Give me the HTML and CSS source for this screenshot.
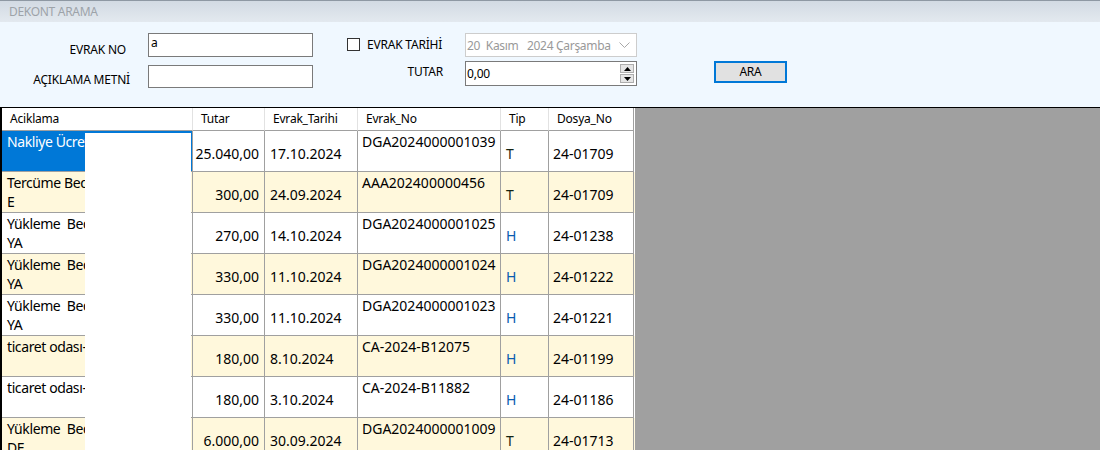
FILE: index.html
```html
<!DOCTYPE html>
<html lang="tr">
<head>
<meta charset="utf-8">
<title>Dekont Arama</title>
<link rel="stylesheet" href="styles.css">
</head>
<body>
<div class="window">
  <div class="titlebar">DEKONT ARAMA</div>
  <form class="search">
    <label class="lbl lbl-evrak">EVRAK NO</label>
    <div class="input input-evrak">a</div>
    <label class="check"><span class="box"></span>EVRAK TARİHİ</label>
    <div class="date"><span class="date-text">20  Kasım   2024 Çarşamba</span>
      <svg class="chev" width="11" height="7" viewBox="0 0 11 7"><polyline points="0.5,0.5 5.5,5.5 10.5,0.5" fill="none" stroke="#a8a8a8" stroke-width="1"/></svg>
    </div>
    <label class="lbl lbl-acik">AÇIKLAMA METNİ</label>
    <div class="input input-acik"></div>
    <label class="lbl lbl-tutar">TUTAR</label>
    <div class="numeric"><span>0,00</span>
      <span class="spin">
        <span class="spin-btn"><svg width="7" height="4" viewBox="0 0 7 4"><polygon points="0,4 7,4 3.5,0" fill="#000"/></svg></span>
        <span class="spin-btn"><svg width="7" height="4" viewBox="0 0 7 4"><polygon points="0,0 7,0 3.5,4" fill="#000"/></svg></span>
      </span>
    </div>
    <button type="button" class="btn">ARA</button>
  </form>
  <div class="workspace">
    <div class="grid">
      <div class="row head">
        <div class="cell">Aciklama</div>
        <div class="cell">Tutar</div>
        <div class="cell">Evrak_Tarihi</div>
        <div class="cell">Evrak_No</div>
        <div class="cell">Tip</div>
        <div class="cell">Dosya_No</div>
      </div>
      <div class="row">
        <div class="cell c-desc selected">Nakliye Ücreti</div>
        <div class="cell c-amt">25.040,00</div>
        <div class="cell c-date">17.10.2024</div>
        <div class="cell c-no">DGA2024000001039</div>
        <div class="cell c-tip t">T</div>
        <div class="cell c-file">24-01709</div>
      </div>
      <div class="row alt">
        <div class="cell c-desc">Tercüme Bed<br>E</div>
        <div class="cell c-amt">300,00</div>
        <div class="cell c-date">24.09.2024</div>
        <div class="cell c-no">AAA202400000456</div>
        <div class="cell c-tip t">T</div>
        <div class="cell c-file">24-01709</div>
      </div>
      <div class="row">
        <div class="cell c-desc">Yükleme  Bed<br>YA</div>
        <div class="cell c-amt">270,00</div>
        <div class="cell c-date">14.10.2024</div>
        <div class="cell c-no">DGA2024000001025</div>
        <div class="cell c-tip h">H</div>
        <div class="cell c-file">24-01238</div>
      </div>
      <div class="row alt">
        <div class="cell c-desc">Yükleme  Bed<br>YA</div>
        <div class="cell c-amt">330,00</div>
        <div class="cell c-date">11.10.2024</div>
        <div class="cell c-no">DGA2024000001024</div>
        <div class="cell c-tip h">H</div>
        <div class="cell c-file">24-01222</div>
      </div>
      <div class="row">
        <div class="cell c-desc">Yükleme  Bed<br>YA</div>
        <div class="cell c-amt">330,00</div>
        <div class="cell c-date">11.10.2024</div>
        <div class="cell c-no">DGA2024000001023</div>
        <div class="cell c-tip h">H</div>
        <div class="cell c-file">24-01221</div>
      </div>
      <div class="row alt">
        <div class="cell c-desc">ticaret odası-</div>
        <div class="cell c-amt">180,00</div>
        <div class="cell c-date">8.10.2024</div>
        <div class="cell c-no">CA-2024-B12075</div>
        <div class="cell c-tip h">H</div>
        <div class="cell c-file">24-01199</div>
      </div>
      <div class="row">
        <div class="cell c-desc">ticaret odası-</div>
        <div class="cell c-amt">180,00</div>
        <div class="cell c-date">3.10.2024</div>
        <div class="cell c-no">CA-2024-B11882</div>
        <div class="cell c-tip h">H</div>
        <div class="cell c-file">24-01186</div>
      </div>
      <div class="row alt">
        <div class="cell c-desc">Yükleme  Bed<br>DE</div>
        <div class="cell c-amt">6.000,00</div>
        <div class="cell c-date">30.09.2024</div>
        <div class="cell c-no">DGA2024000001009</div>
        <div class="cell c-tip t">T</div>
        <div class="cell c-file">24-01713</div>
      </div>
    </div>
    <div class="redact"></div>
  </div>
</div>
</body>
</html>
```

FILE: styles.css
```css
html, body {
  margin: 0;
  padding: 0;
}
body {
  width: 1100px;
  height: 450px;
  overflow: hidden;
  font-family: "Noto Sans", "Open Sans", sans-serif;
  color: #000;
}
.window {
  display: flex;
  flex-direction: column;
  height: 450px;
}
.titlebar {
  height: 21px;
  border-top: 1px solid #8e98a3;
  background: linear-gradient(#d2dae3, #e3e9ef);
  color: #9da3a9;
  font-size: 12px;
  line-height: 21px;
  padding-left: 9px;
  letter-spacing: -0.3px;
}
.search {
  height: 85px;
  box-sizing: border-box;
  margin: 0;
  padding-top: 11px;
  background: #f0f8ff;
  display: grid;
  grid-template-columns: 148px 199px 118px 249px 73px;
  grid-template-rows: 28px 27px;
  font-size: 12px;
  letter-spacing: -0.2px;
}
.lbl {
  line-height: 16px;
  justify-self: end;
  align-self: start;
  white-space: nowrap;
}
.lbl-evrak {
  grid-column: 1;
  grid-row: 1;
  margin-right: 22px;
  margin-top: 9px;
}
.lbl-acik {
  grid-column: 1;
  grid-row: 2;
  margin-right: 18px;
  margin-top: 11px;
}
.lbl-tutar {
  grid-column: 3;
  grid-row: 2;
  margin-right: 22px;
  margin-top: 3px;
}
.input {
  box-sizing: border-box;
  width: 165px;
  border: 1px solid #7a7a7a;
  background: #fff;
  padding: 1px 2px;
  line-height: 16px;
  align-self: start;
}
.input-evrak {
  grid-column: 2;
  grid-row: 1;
  height: 24px;
}
.input-acik {
  grid-column: 2;
  grid-row: 2;
  height: 23px;
  margin-top: 4px;
}
.check {
  grid-column: 3;
  grid-row: 1;
  align-self: start;
  margin-top: 4px;
  display: flex;
  align-items: center;
  gap: 7px;
  line-height: 16px;
  white-space: nowrap;
}
.box {
  width: 11px;
  height: 11px;
  margin-top: -2px;
  border: 1px solid #333;
  background: #fff;
}
.date {
  grid-column: 4;
  grid-row: 1;
  align-self: start;
  box-sizing: border-box;
  width: 172px;
  height: 24px;
  border: 1px solid #cdcdcd;
  background: #fff;
  display: flex;
  align-items: center;
  justify-content: space-between;
  padding: 0 6px 0 1px;
  color: #999;
}
.date-text {
  white-space: pre;
  letter-spacing: -0.3px;
}
.chev {
  display: block;
}
.numeric {
  grid-column: 4;
  grid-row: 2;
  align-self: start;
  box-sizing: border-box;
  width: 172px;
  height: 25px;
  border: 1px solid #7a7a7a;
  background: #fff;
  display: flex;
  align-items: center;
  justify-content: space-between;
  padding: 0 2px 0 1px;
  line-height: 16px;
}
.spin {
  display: flex;
  flex-direction: column;
  gap: 1px;
}
.spin-btn {
  width: 14px;
  height: 9px;
  box-sizing: border-box;
  border: 1px solid #adadad;
  background: #e5e5e5;
  display: flex;
  align-items: center;
  justify-content: center;
}
.spin-btn svg {
  display: block;
}
.btn {
  grid-column: 5;
  grid-row: 2;
  align-self: start;
  width: 73px;
  height: 22px;
  box-sizing: border-box;
  border: 2px solid #0078d7;
  background: #e1e1e1;
  font-family: inherit;
  font-size: 12px;
  letter-spacing: -0.2px;
  color: #000;
  padding: 0;
  line-height: 16px;
}
.workspace {
  position: relative;
  flex: 1;
  background: #a0a0a0;
  border-top: 1px solid #000;
  border-left: 2px solid #000;
  overflow: hidden;
}
.grid {
  width: 633px;
}
.row {
  display: grid;
  grid-template-columns: 191px 72px 93px 143px 48px 85px;
  background: #fff;
}
.row.alt {
  background: #fff8dc;
}
.cell {
  box-sizing: border-box;
  height: 41px;
  border-right: 1px solid #a0a0a0;
  border-bottom: 1px solid #a0a0a0;
  font-size: 14px;
  line-height: 19px;
  white-space: pre;
  overflow: hidden;
}
.head .cell {
  height: 23px;
  border-right-color: #e2e2e2;
  font-size: 12px;
  line-height: 22px;
  padding-left: 8px;
  letter-spacing: -0.2px;
}
.head .cell:last-child {
  border-right-color: #a0a0a0;
}
.c-desc {
  padding: 1px 4px 0 5px;
  letter-spacing: -0.4px;
}
.c-desc.selected {
  background: #0078d7;
  color: #fff;
}
.c-amt {
  display: flex;
  align-items: center;
  justify-content: flex-end;
  padding: 4px 5px 0 0;
}
.c-date {
  display: flex;
  align-items: center;
  padding: 4px 0 0 5px;
}
.c-no {
  padding: 1px 0 0 4px;
}
.c-tip {
  display: flex;
  align-items: center;
  padding: 4px 0 0 5px;
}
.c-tip.h {
  color: #0a5cb0;
}
.c-tip.t {
  color: #142414;
}
.c-file {
  display: flex;
  align-items: center;
  padding: 4px 0 0 4px;
}
.redact {
  position: absolute;
  left: 83px;
  top: 25px;
  width: 106px;
  bottom: 0;
  background: #fff;
}
```
